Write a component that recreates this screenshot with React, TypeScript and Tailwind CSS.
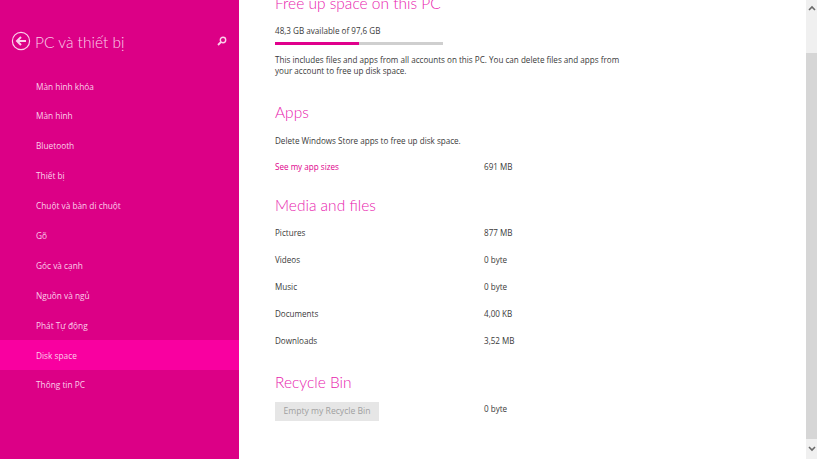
const navItems = [
  'Màn hình khóa',
  'Màn hình',
  'Bluetooth',
  'Thiết bị',
  'Chuột và bàn di chuột',
  'Gõ',
  'Góc và cạnh',
  'Nguồn và ngủ',
  'Phát Tự động',
  'Disk space',
  'Thông tin PC',
]

const mediaRows = [
  ['Pictures', '877 MB'],
  ['Videos', '0 byte'],
  ['Music', '0 byte'],
  ['Documents', '4,00 KB'],
  ['Downloads', '3,52 MB'],
]

function Heading({ children }: { children: string }) {
  return <h2 className="font-['Lato',sans-serif] text-[15.5px] font-light leading-[22px] text-[#e822ae]">{children}</h2>
}

export default function App() {
  return (
    <div className="flex h-[459px] w-[817px] overflow-hidden bg-white font-['Open_Sans',sans-serif] text-[8.1px] text-[#3a3a3a]">
      <aside className="w-[239px] shrink-0 bg-[#dc0086] text-[8.3px] text-[#fbd0ea]">
        <div className="flex h-[71px] items-start pl-[11px] pr-[12px] pt-[32px]">
          <svg width="20" height="20" viewBox="0 0 20 20" fill="none" stroke="#fbd0ea" className="-mt-[1px] shrink-0">
            <circle cx="10" cy="10" r="8.6" strokeWidth="1.2" />
            <path d="M15 10H6.5M10 6 6 10l4 4" strokeWidth="2" />
          </svg>
          <h1 className="ml-[4px] font-['Lato',sans-serif] text-[15.5px] font-light leading-[21px]">PC và thiết bị</h1>
          <svg width="10" height="10" viewBox="0 0 10 10" fill="none" stroke="#fbd0ea" className="ml-auto mt-[4px] shrink-0">
            <circle cx="6" cy="4" r="2.7" strokeWidth="1.4" />
            <path d="M4 6 1 9" strokeWidth="1.8" />
          </svg>
        </div>
        <nav className="flex flex-col">
          {navItems.map((item) => (
            <div
              key={item}
              className={`flex h-[29.9px] items-center pl-[36px] pt-[1.6px] ${item === 'Disk space' ? 'bg-[#f900a0]' : ''}`}
            >
              {item}
            </div>
          ))}
        </nav>
      </aside>

      <main className="min-w-0 flex-1 pl-[36px]">
        <h2 className="-mt-[8px] font-['Lato',sans-serif] text-[15.5px] font-light leading-[22px] text-[#e822ae]">Free up space on this PC</h2>
        <p className="mt-[11px] leading-[12px]">48,3 GB available of 97,6 GB</p>
        <div className="mt-[5px] h-[3px] w-[168px] bg-[#cfcfcf]">
          <div className="h-full w-[84px] bg-[#e0008c]" />
        </div>
        <p className="mt-[9px] w-[350px] leading-[11px]">
          This includes files and apps from all accounts on this PC. You can delete files and apps from your account to free up disk space.
        </p>

        <div className="mt-[25px]">
          <Heading>Apps</Heading>
        </div>
        <p className="mt-[12px] leading-[12px]">Delete Windows Store apps to free up disk space.</p>
        <div className="mt-[14px] flex leading-[12px]">
          <span className="w-[209px] text-[#e0008c]">See my app sizes</span>
          <span>691 MB</span>
        </div>

        <div className="mt-[21px]">
          <Heading>Media and files</Heading>
        </div>
        <div className="mt-[4px] flex flex-col">
          {mediaRows.map(([label, size]) => (
            <div key={label} className="flex h-[27px] items-center">
              <span className="w-[209px]">{label}</span>
              <span>{size}</span>
            </div>
          ))}
        </div>

        <div className="mt-[16px]">
          <Heading>Recycle Bin</Heading>
        </div>
        <div className="mt-[9px] flex items-start">
          <button className="h-[19px] w-[104px] bg-[#e6e6e6] text-[8.6px] text-[#a0a0a0]">Empty my Recycle Bin</button>
          <span className="ml-[105px] mt-[1px] leading-[12px]">0 byte</span>
        </div>
      </main>

      <div className="flex w-[11px] shrink-0 flex-col bg-[#f0f0f0]">
        <div className="flex h-[16px] items-center justify-center">
          <svg width="8" height="6" viewBox="0 0 8 6" fill="none" stroke="#6a6a6a" strokeWidth="1.6">
            <path d="M1 5 4 2l3 3" />
          </svg>
        </div>
        <div className="mt-[37px] h-[386px] bg-[#d6d6d6]" />
        <div className="flex flex-1 items-center justify-center">
          <svg width="8" height="6" viewBox="0 0 8 6" fill="none" stroke="#6a6a6a" strokeWidth="1.6">
            <path d="M1 1 4 4l3-3" />
          </svg>
        </div>
      </div>
    </div>
  )
}
